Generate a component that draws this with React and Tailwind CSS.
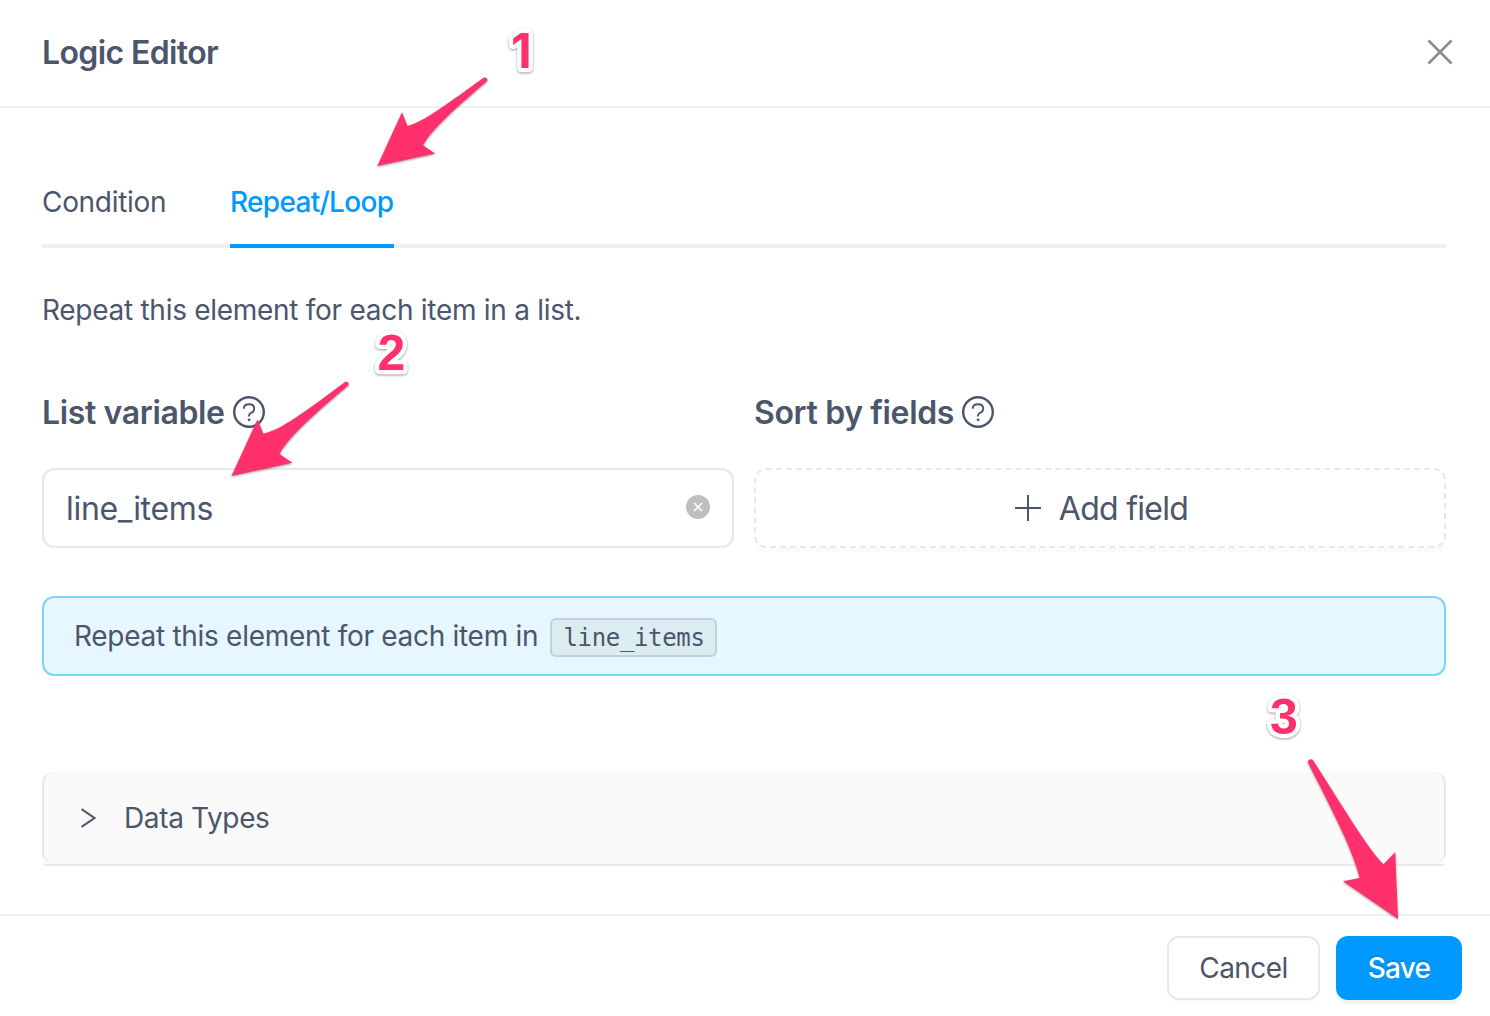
import React from "react";

function HelpIcon() {
  return (
    <svg className="size-8 shrink-0" viewBox="0 0 32 32" fill="none" stroke="currentColor">
      <circle cx="16" cy="16" r="14.8" strokeWidth="2.4" />
      <path d="M10.8 12.7C10.8 9.7 13 8.3 16 8.3s5.2 1.6 5.2 4.4c0 2.2-1.3 3.4-3.1 4.2-1.5.6-2.1 1.2-2.1 2.5v1" strokeWidth="1.9" />
      <circle cx="16.1" cy="23.8" r="1.4" fill="currentColor" stroke="none" />
    </svg>
  );
}

const ARROW = "#ff306c";

function Annotations() {
  return (
    <svg className="pointer-events-none absolute inset-0 h-[1016px] w-[1490px]" viewBox="0 0 1490 1016">
      <g fill={ARROW} className="[filter:drop-shadow(0_1.5px_1px_rgba(0,0,0,0.4))]">
        <path d="M377.3 166 402 112.3 407.5 126C424 122 447 104 484 77.6A2.6 2.6 0 0 1 487.2 81C459 105 432 129 423 145.3L435 153.5Z" />
        <path d="M231.5 476 257.5 419.5 263.4 433.8C281 430 306 411 345.5 381.8A2.6 2.6 0 0 1 348.5 385.2C319 410 289 436 279.5 454L292.3 462.7Z" />
        <path d="M1398 919 1395.2 852.2 1383.5 864.3C1368 849 1347 813 1313.5 761A2.7 2.7 0 0 0 1308.3 763.2C1332 810 1353 850 1359.7 878L1343 881.3Z" />
      </g>
      <g
        fill={ARROW}
        stroke="#fff"
        strokeWidth="8.5"
        strokeLinejoin="round"
        className="text-[50px] font-bold [font-family:'Liberation_Sans',sans-serif] [filter:drop-shadow(0_1.5px_1px_rgba(0,0,0,0.4))] [paint-order:stroke]"
      >
        <text x="511" y="67.5" className="text-[48px] [font-family:Inter,sans-serif]">1</text>
        <text x="377.5" y="369.6">2</text>
        <text x="1270" y="733.8">3</text>
      </g>
    </svg>
  );
}

export default function App() {
  return (
    <div className="relative flex h-[1016px] w-[1490px] flex-col overflow-hidden bg-white text-[28px] leading-[44px] text-[#4b566b] [font-family:Inter,sans-serif]">
      <header className="flex h-[108px] shrink-0 items-center justify-between border-b-2 border-[#f0f0f0] pr-[37px] pl-[42px]">
        <h1 className="text-[32px] font-semibold tracking-[-0.62px]">Logic Editor</h1>
        <svg className="mb-0.5 size-[26px]" viewBox="0 0 26 26" fill="none" stroke="#8c8c8c" strokeWidth="2.6">
          <path d="M1.5 1.5l23 23M24.5 1.5l-23 23" />
        </svg>
      </header>

      <main className="flex h-[806px] shrink-0 flex-col pr-[44px] pl-[42px]">
        <nav className="mt-[48px] flex h-[92px] shrink-0 gap-16 border-b-4 border-[#f0f0f0]">
          <button className="h-[92px] w-[124px] pb-px text-left tracking-[-0.31px] whitespace-nowrap">Condition</button>
          <button className="h-[92px] w-[164px] border-b-4 border-[#0099ff] pt-1 text-left font-medium tracking-[-0.7px] whitespace-nowrap text-[#0099ff]">Repeat/Loop</button>
        </nav>

        <p className="mt-[40px] tracking-[-0.28px]">Repeat this element for each item in a list.</p>

        <div className="mt-[58px] grid grid-cols-2 gap-5">
          <section>
            <h2 className="flex h-[44px] items-center justify-start text-[32px] font-semibold">
              <span className="w-[191px] pt-0.5 tracking-[-0.36px] whitespace-nowrap">List variable</span>
              <HelpIcon />
            </h2>
            <div className="mt-[34px] flex h-20 items-center justify-between rounded-xl border-2 border-[#e8e8e8] px-[22px] text-[32px]">
              <span className="pt-0.5 tracking-[-0.31px]">line_items</span>
              <svg className="mb-0.5 size-6" viewBox="0 0 24 24">
                <circle cx="12" cy="12" r="12" fill="#bfbfbf" />
                <path d="M8 8l8 8M16 8l-8 8" stroke="#fff" strokeWidth="1.6" />
              </svg>
            </div>
          </section>
          <section>
            <h2 className="flex h-[44px] items-center justify-start text-[32px] font-semibold">
              <span className="w-[208px] pt-0.5 tracking-[-0.36px] whitespace-nowrap">Sort by fields</span>
              <HelpIcon />
            </h2>
            <button className="mt-[34px] flex h-20 w-full items-center justify-center gap-[18px] rounded-xl border-2 border-dashed border-[#e8e8e8] pl-[3px] text-[32px] shadow-[0_4px_0_rgba(0,0,0,0.016)]">
              <svg className="size-[26px]" viewBox="0 0 26 26" stroke="currentColor" strokeWidth="2"><path d="M13 0v26M0 13h26" /></svg>
              <span className="pt-0.5 tracking-[-0.72px]">Add field</span>
            </button>
          </section>
        </div>

        <div className="mt-12 flex h-20 shrink-0 items-center rounded-xl border-2 border-[#7ad5ff] bg-[#e6f7ff] pl-[30px]">
          <span className="w-[476px] tracking-[-0.29px] whitespace-nowrap">Repeat this element for each item in</span>
          <code className="mt-0.5 flex h-[39px] w-[167px] items-center justify-center rounded-md border-2 border-[#c5cfd7] bg-[#dcedf2] pt-0.5 pl-px text-[24px] tracking-[-0.35px] [font-family:'DejaVu_Sans_Mono',monospace]">line_items</code>
        </div>

        <div className="mt-24 h-[94px] shrink-0">
          <div className="flex h-[92px] items-center rounded-xl border-x-2 border-[#e8e8e8] bg-[#fafafa] pl-[37px]">
            <svg className="h-5 w-[15px]" viewBox="0 0 15 20" fill="none" stroke="currentColor" strokeWidth="2.1"><path d="M.5 1 13.5 10 .5 19" /></svg>
            <span className="ml-7 tracking-[-0.36px]">Data Types</span>
          </div>
          <div className="mx-0.5 h-0.5 bg-[#e8e8e8]" />
        </div>
      </main>

      <footer className="flex h-[102px] shrink-0 items-start justify-end gap-4 border-t-2 border-[#f0f0f0] pt-5 pr-7">
        <button className="h-16 w-[153px] rounded-xl border-2 border-[#e8e8e8] tracking-[-0.55px] shadow-[0_4px_0_rgba(0,0,0,0.016)]">Cancel</button>
        <button className="h-16 w-[126px] rounded-xl bg-[#0099ff] font-medium tracking-[-0.8px] text-white shadow-[0_4px_0_rgba(0,0,0,0.045)] [text-shadow:0_-2px_0_rgba(0,0,0,0.12)]">Save</button>
      </footer>
      <Annotations />
    </div>
  );
}
